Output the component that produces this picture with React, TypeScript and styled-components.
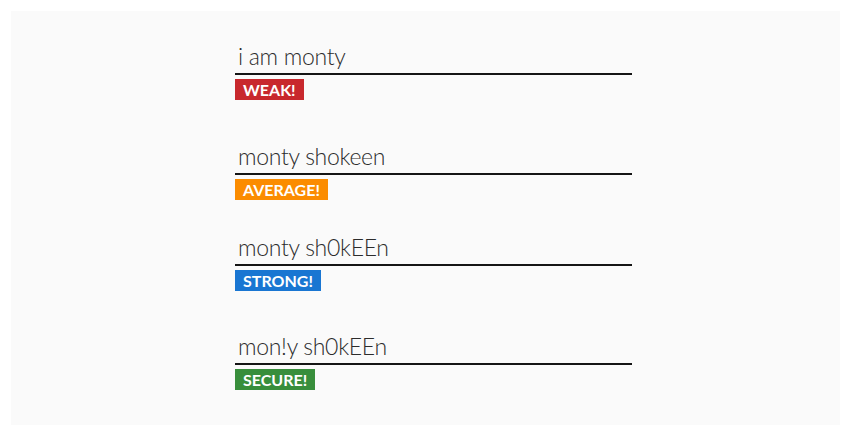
import React from "react";
import styled, { createGlobalStyle } from "styled-components";

const Global = createGlobalStyle`
  html, body { margin: 0; padding: 0; background: #ffffff; }
  body { font-family: Lato, "Open Sans", sans-serif; }
`;

const Page = styled.div`
  padding: 11px 10px 10px 11px;
  box-sizing: border-box;
  width: 850px;
  height: 435px;
`;

const Panel = styled.div`
  background: #fafafa;
  height: 414px;
  box-sizing: border-box;
  padding: 32px 0 0 224px;
  display: flex;
  flex-direction: column;
`;

const Field = styled.div<{ $top: number }>`
  display: flex;
  flex-direction: column;
  align-items: flex-start;
  gap: 4px;
  margin-top: ${(p) => p.$top}px;
`;

const Input = styled.input`
  width: 397px;
  height: 32px;
  box-sizing: border-box;
  border: none;
  border-bottom: 2px solid #151515;
  background: transparent;
  padding: 0 3px 4px;
  margin: 0;
  font-family: Lato, sans-serif;
  font-weight: 300;
  font-size: 23px;
  line-height: 26px;
  letter-spacing: -0.3px;
  color: #2c2c2c;
  outline: none;
`;

const Badge = styled.span<{ $color: string }>`
  display: inline-block;
  background: ${(p) => p.$color};
  color: #fff;
  font-family: Lato, sans-serif;
  font-weight: 700;
  font-size: 16px;
  line-height: 21px;
  height: 21px;
  padding: 0 8px;
`;

const items = [
  { value: "i am monty", label: "WEAK!", color: "#c8282d", top: 0 },
  { value: "monty shokeen", label: "AVERAGE!", color: "#fb8c00", top: 43 },
  { value: "monty sh0kEEn", label: "STRONG!", color: "#1976d2", top: 34 },
  { value: "mon!y sh0kEEn", label: "SECURE!", color: "#388e3c", top: 42 },
];

export default function App() {
  return (
    <>
      <Global />
      <Page>
        <Panel>
          {items.map((it) => (
            <Field key={it.label} $top={it.top}>
              <Input defaultValue={it.value} />
              <Badge $color={it.color}>{it.label}</Badge>
            </Field>
          ))}
        </Panel>
      </Page>
    </>
  );
}
